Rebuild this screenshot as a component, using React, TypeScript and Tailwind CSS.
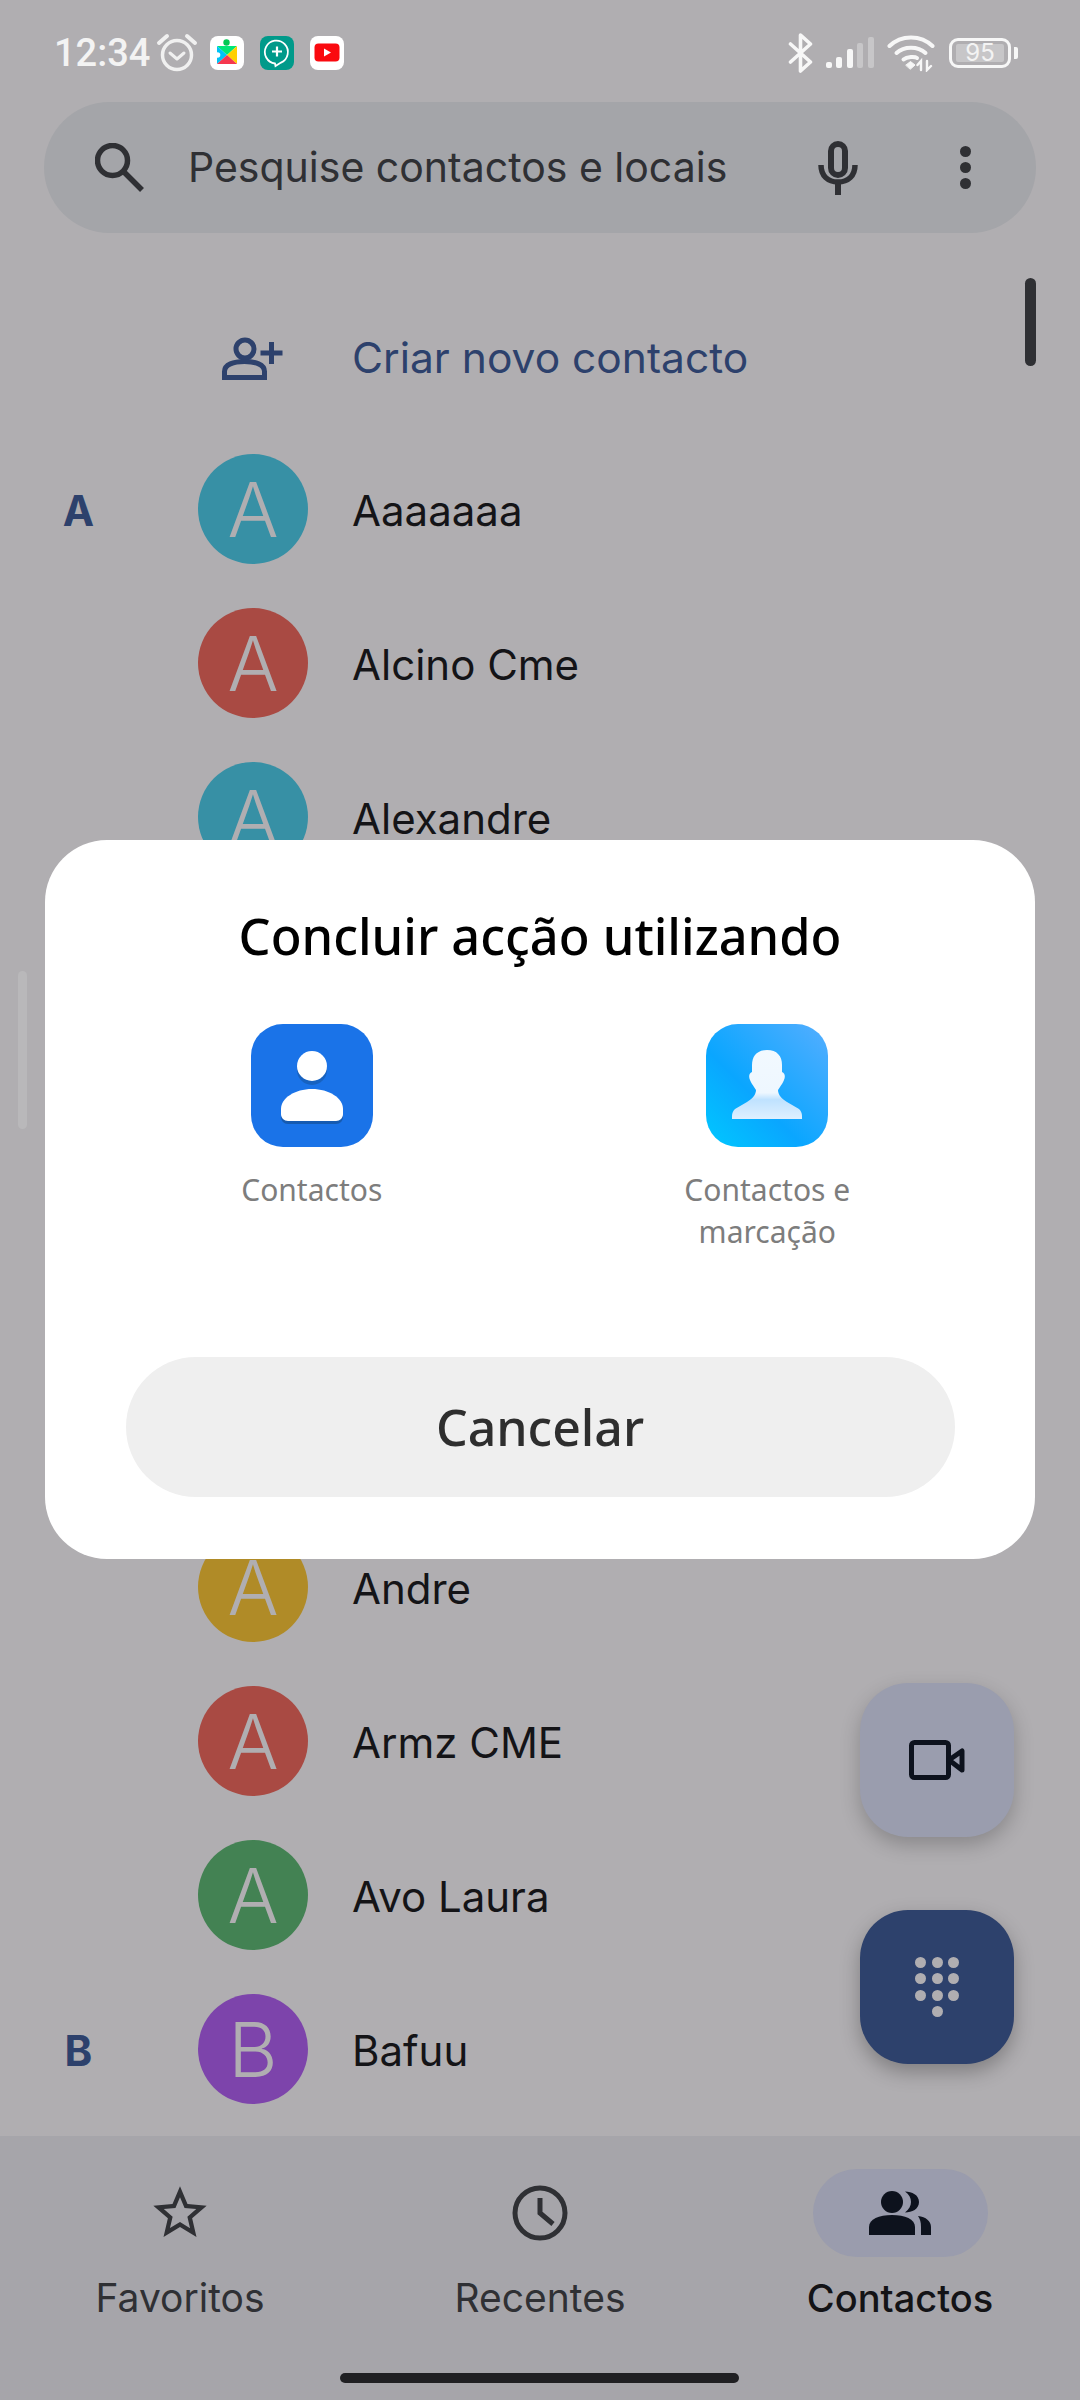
const contactsTop = [
  { name: 'Aaaaaaa', letter: 'A', color: 'bg-[#3790a5]', section: 'A' },
  { name: 'Alcino Cme', letter: 'A', color: 'bg-[#a94a43]' },
  { name: 'Alexandre', letter: 'A', color: 'bg-[#3790a5]' },
];

const contactsBottom = [
  { name: 'Andre', letter: 'A', color: 'bg-[#b08b27]' },
  { name: 'Armz CME', letter: 'A', color: 'bg-[#a94a43]' },
  { name: 'Avo Laura', letter: 'A', color: 'bg-[#438253]' },
  { name: 'Bafuu', letter: 'B', color: 'bg-[#7d44ab]', section: 'B' },
];

type Contact = { name: string; letter: string; color: string; section?: string };

function ContactRow({ contact }: { contact: Contact }) {
  return (
    <div className="flex h-[154px] items-center">
      <div className="mr-[41px] w-[157px] pt-[3px] text-center text-[42px] leading-none font-bold text-[#2d416c]">{contact.section}</div>
      <div className={`flex h-[110px] w-[110px] items-center justify-center rounded-full text-[76px] leading-none font-light text-[#b0aeb1] ${contact.color}`}>
        {contact.letter}
      </div>
      <div className="ml-[44px] pt-[3px] text-[42px] text-[#141417]">{contact.name}</div>
    </div>
  );
}

function StatusBar() {
  return (
    <div className="flex h-[102px] items-start justify-between pt-[33px] pr-[69px] pl-[54px]">
      <div className="flex items-center">
        <span className="font-['Roboto',sans-serif] text-[38px] leading-[38px] font-medium text-[#f3f3f3]">12:34</span>
        <svg width="42" height="40" viewBox="0 0 42 40" className="ml-[6px]" fill="none" stroke="#f0f0f0" strokeLinecap="round">
          <circle cx="21" cy="22" r="14.5" strokeWidth="3.5" />
          <path d="M14 20l7 6 7-6" strokeWidth="3" strokeLinejoin="round" />
          <path d="M3 10l8-7M39 10l-8-7" strokeWidth="4" />
        </svg>
        <div className="ml-[12px] flex gap-[16px]">
          <svg width="34" height="34" viewBox="0 0 34 34">
            <rect width="34" height="34" rx="8" fill="#fff" />
            <path d="M27 10H7l10 9z" fill="#00e676" />
            <circle cx="16.5" cy="6.5" r="3.2" fill="#00c853" />
            <path d="M7 10l10 9-10 9z" fill="#00c3f7" />
            <path d="M27 10l-10 9 10 9z" fill="#ffd000" />
            <path d="M7 28h20L17 19z" fill="#f5384f" />
            <circle cx="7.5" cy="19" r="2.8" fill="#fff" />
          </svg>
          <svg width="34" height="34" viewBox="0 0 34 34">
            <rect width="34" height="34" rx="8" fill="#009a8a" />
            <path d="M15 27.5A11.5 11.5 0 1 1 21 26.6L15.5 30z" fill="none" stroke="#fff" strokeWidth="1.8" />
            <path d="M17 10.5v10M12 15.5h10" stroke="#fff" strokeWidth="2.2" />
          </svg>
          <svg width="34" height="34" viewBox="0 0 34 34">
            <rect width="34" height="34" rx="8" fill="#fff" />
            <rect x="4.5" y="7.5" width="25" height="18" rx="4" fill="#fa0a0f" />
            <path d="M14 12.5v8l7-4z" fill="#fff" />
          </svg>
        </div>
      </div>
      <div className="flex items-center">
        <svg width="26" height="40" viewBox="0 0 26 40" fill="none" stroke="#f7f7f7" strokeWidth="3.6" strokeLinecap="round" strokeLinejoin="round">
          <path d="M2.5 11l20 18-10 9V2l10 9-20 18" />
        </svg>
        <svg width="48" height="32" viewBox="0 0 48 32" className="ml-[12px]">
          <rect x="0" y="25" width="6" height="6" rx="2" fill="#f7f7f7" />
          <rect x="10" y="20" width="6" height="11" rx="2" fill="#f7f7f7" />
          <rect x="21" y="12" width="6" height="19" rx="2" fill="#f7f7f7" />
          <rect x="31" y="6" width="6" height="25" rx="2" fill="#c7c6c8" />
          <rect x="42" y="0" width="6" height="31" rx="2" fill="#c7c6c8" />
        </svg>
        <svg width="48" height="38" viewBox="0 0 48 38" className="ml-[13px]" fill="none" stroke="#f7f7f7" strokeLinecap="round">
          <path d="M2.5 12C14 0.5 34 0.5 45.5 12" strokeWidth="4" />
          <path d="M9.5 19C17 12 31 12 38.5 19" strokeWidth="4" />
          <path d="M16.5 25.5C20 22.5 28 22.5 30 24" strokeWidth="4" />
          <path d="M19 31l4.5-3.5 4.5 3.5-4.5 4z" fill="#f7f7f7" strokeWidth="1" />
          <path d="M34 36v-9l-3.5 4M40 27v9l4-4" strokeWidth="2.4" />
        </svg>
        <div className="relative ml-[14px] flex h-[30px] w-[62px] items-center justify-center rounded-[9px] border-[3px] border-[#f7f7f7]">
          <div className="flex h-[18px] w-[48px] items-center justify-center rounded-[2px] bg-[#c7c6c8] text-[24px] leading-none text-[#f3f3f3]">95</div>
          <div className="absolute top-[6px] -right-[10px] h-[12px] w-[4px] rounded-r-[2px] bg-[#f7f7f7]" />
        </div>
      </div>
    </div>
  );
}

function SearchBar() {
  return (
    <div className="mx-[44px] flex h-[131px] items-center rounded-full bg-[#a4a5a9] pr-[65px] text-[#2f3034]">
      <svg width="50" height="50" viewBox="0 0 50 50" className="ml-[51px]" fill="none" stroke="#2f3034" strokeWidth="5.5">
        <circle cx="17.5" cy="17.5" r="15" />
        <path d="M28 28l19 19" />
      </svg>
      <span className="ml-[43px] text-[41px]">Pesquise contactos e locais</span>
      <svg width="40" height="54" viewBox="0 0 40 54" className="mr-[102px] ml-auto" fill="none" stroke="#2f3034">
        <rect x="13" y="3" width="14" height="31" rx="7" strokeWidth="6" />
        <path d="M3 24c0 11 7 17 17 17s17-6 17-17" strokeWidth="5.5" />
        <path d="M20 41v13" strokeWidth="6" />
      </svg>
      <div className="flex flex-col gap-[5px]">
        <div className="h-[11px] w-[11px] rounded-full bg-[#2f3034]" />
        <div className="h-[11px] w-[11px] rounded-full bg-[#2f3034]" />
        <div className="h-[11px] w-[11px] rounded-full bg-[#2f3034]" />
      </div>
    </div>
  );
}

function BottomNav() {
  return (
    <div className="relative grid h-[264px] grid-cols-3 bg-[#a6a5aa]">
      <div className="flex flex-col items-center pt-[33px]">
        <div className="flex h-[88px] items-center">
          <svg width="64" height="64" viewBox="0 0 24 24" fill="#2f3034">
            <path d="M22 9.24l-7.19-.62L12 2 9.19 8.63 2 9.24l5.46 4.73L5.82 21 12 17.27 18.18 21l-1.63-7.03L22 9.24zM12 15.4l-3.76 2.27 1-4.28-3.32-2.88 4.38-.38L12 6.1l1.71 4.04 4.38.38-3.32 2.88 1 4.28L12 15.4z" />
          </svg>
        </div>
        <span className="mt-[18px] text-[39px] leading-[46px] text-[#2f3034]">Favoritos</span>
      </div>
      <div className="flex flex-col items-center pt-[33px]">
        <div className="flex h-[88px] items-center">
          <svg width="56" height="56" viewBox="0 0 56 56" fill="none" stroke="#2f3034" strokeWidth="5">
            <circle cx="28" cy="28" r="25" />
            <path d="M28 13v15l13 11" />
          </svg>
        </div>
        <span className="mt-[18px] text-[39px] leading-[46px] text-[#2f3034]">Recentes</span>
      </div>
      <div className="flex flex-col items-center pt-[33px]">
        <div className="flex h-[88px] w-[175px] items-center justify-center rounded-full bg-[#9a9cad]">
          <svg width="62" height="44" viewBox="0 0 62 44" fill="#0d121d">
            <circle cx="23" cy="11" r="11" />
            <path d="M0 44v-8c0-8 10-12 23-12s23 4 23 12v8z" />
            <path d="M36 .5C43 .5 50 4 50 11S43 21.500 36 21.500C40 18 42 15 42 11S40 3 36 .5z" />
            <path d="M49 25c8 1 13 5 13 11v8H52v-8c0-5-1-8-3-11z" />
          </svg>
        </div>
        <span className="mt-[18px] text-[38px] leading-[46px] font-medium text-[#131316]">Contactos</span>
      </div>
      <div className="absolute top-[237px] left-[340px] h-[10px] w-[399px] rounded-full bg-[#202023]" />
    </div>
  );
}

function ChooserDialog() {
  return (
    <div className="absolute top-[840px] left-[45px] flex h-[719px] w-[990px] flex-col rounded-[62px] bg-white font-['Noto_Sans',sans-serif]">
      <h2 className="mt-[62px] text-center text-[50.500px] leading-[68px] font-medium text-black">Concluir acção utilizando</h2>
      <div className="mt-[54px] grid grid-cols-2 pr-[40px] pl-[39px]">
        <div className="flex flex-col items-center">
          <svg width="122" height="123" viewBox="0 0 122 123">
            <rect width="122" height="123" rx="32" fill="#1a73e8" />
            <circle cx="61" cy="46" r="15" fill="#15539f" opacity="0.55" />
            <path d="M30 88C30 77 44 68 61 68S92 77 92 88V93C92 97 89 100 85 100H37C33 100 30 97 30 93z" fill="#15539f" opacity="0.75" />
            <circle cx="61" cy="42" r="15" fill="#fff" />
            <path d="M30 85C30 74 44 65 61 65S92 74 92 85V90C92 94 89 97 85 97H37C33 97 30 94 30 90z" fill="#fff" />
          </svg>
          <span className="mt-[22px] text-[30px] leading-[42px] text-[#7d7d7d]">Contactos</span>
        </div>
        <div className="flex flex-col items-center">
          <svg width="122" height="123" viewBox="0 0 122 123">
            <defs>
              <linearGradient id="dialBg" x1="0" y1="1" x2="1" y2="0">
                <stop offset="0" stopColor="#00c8ff" />
                <stop offset="0.4" stopColor="#0aa6ff" />
                <stop offset="1" stopColor="#55aeff" />
              </linearGradient>
              <linearGradient id="dialPerson" x1="0" y1="0" x2="0" y2="1">
                <stop offset="0" stopColor="#f2f9ff" />
                <stop offset="0.62" stopColor="#eef7ff" />
                <stop offset="0.72" stopColor="#bfe2ff" />
                <stop offset="1" stopColor="#dff0ff" />
              </linearGradient>
            </defs>
            <rect width="122" height="123" rx="32" fill="url(#dialBg)" />
            <path
              d="M61 26C51 26 46 32 46 41L46 48C43 49 42.500 53 44 56C45 59 47 61 48 63L50 66C50 71 46 75 41 78L29 85C27 87 26 89 26 92L26 95H96V92C96 89 95 87 93 85L81 78C76 75 72 71 72 66L74 63C75 61 77 59 78 56C79.500 53 79 49 76 48L76 41C76 32 71 26 61 26Z"
              fill="url(#dialPerson)"
            />
          </svg>
          <span className="mt-[22px] text-center text-[30px] leading-[42px] text-[#7d7d7d]">
            Contactos e
            <br />
            marcação
          </span>
        </div>
      </div>
      <button className="mx-auto mt-auto mb-[62px] h-[140px] w-[829px] rounded-full bg-[#efefef] text-[50px] font-medium text-[#2e2e2e]">Cancelar</button>
    </div>
  );
}

export default function App() {
  return (
    <div className="relative flex h-[2400px] w-[1080px] flex-col overflow-hidden bg-[#b0aeb1] font-['Inter',sans-serif]">
      <StatusBar />
      <SearchBar />

      <div className="flex-1 overflow-hidden pt-[50px]">
        <div className="flex h-[149px] items-center">
          <svg width="62" height="44" viewBox="0 0 62 44" className="ml-[222px]" fill="none" stroke="#2d416c" strokeWidth="5">
            <circle cx="23" cy="13" r="9" />
            <path d="M2.500 41.500v-6c0-7 9-10 20-10s20 3 20 10v6z" />
            <path d="M49.500 6v22M38.500 17h22" />
          </svg>
          <span className="ml-[68px] text-[42.500px] text-[#2d416c]">Criar novo contacto</span>
        </div>
        {contactsTop.map((contact) => (
          <ContactRow key={contact.name} contact={contact} />
        ))}
        {/* rows behind the dialog */}
        <div className="h-[616px]" />
        {contactsBottom.map((contact) => (
          <ContactRow key={contact.name} contact={contact} />
        ))}
      </div>

      <BottomNav />

      {/* scroll thumbs */}
      <div className="absolute top-[278px] left-[1025px] h-[88px] w-[11px] rounded-full bg-[#2f3034]" />
      <div className="absolute top-[971px] left-[18px] h-[158px] w-[9px] rounded-full bg-[#b9b8ba]" />

      {/* floating buttons */}
      <div className="absolute top-[1683px] left-[860px] flex h-[154px] w-[154px] items-center justify-center rounded-[48px] bg-[#9a9dae] shadow-[0_8px_20px_rgba(0,0,0,0.22)]">
        <svg width="56" height="40" viewBox="0 0 56 40" fill="none" stroke="#0d121d" strokeWidth="5" strokeLinejoin="round">
          <rect x="2.500" y="2.500" width="37" height="35" rx="3" />
          <path d="M40 20l13-9v19z" />
        </svg>
      </div>
      <div className="absolute top-[1910px] left-[860px] flex h-[154px] w-[154px] items-center justify-center rounded-[48px] bg-[#2d416c] shadow-[0_8px_20px_rgba(0,0,0,0.28)]">
        <div className="grid grid-cols-3 gap-[5.500px]">
          {[0, 1, 2, 3, 4, 5, 6, 7, 8].map((dot) => (
            <div key={dot} className="h-[11px] w-[11px] rounded-full bg-[#b0aeb1]" />
          ))}
          <div className="col-start-2 h-[11px] w-[11px] rounded-full bg-[#b0aeb1]" />
        </div>
      </div>

      <ChooserDialog />
    </div>
  );
}
